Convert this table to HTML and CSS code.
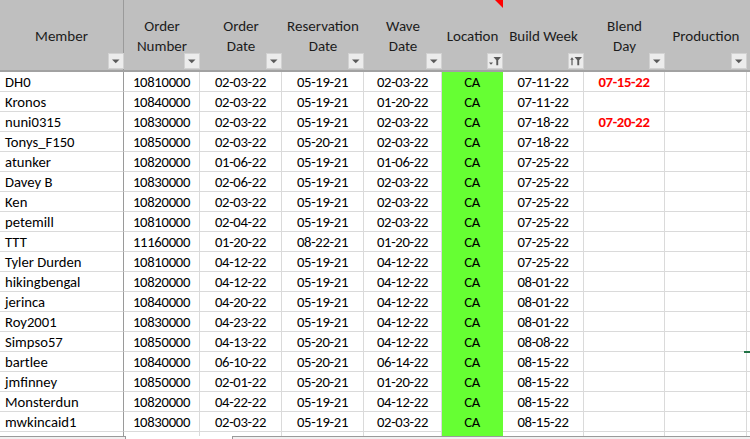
FILE: index.html
```html
<!DOCTYPE html>
<html>
<head>
<meta charset="utf-8">
<link rel="stylesheet" href="styles.css">
</head>
<body>
<div class="sheet">
  <div class="hdr">
    <div class="hc c1"><span>Member</span><i class="fbtn"><svg viewBox="0 0 14 14"><path d="M3 5.5H10.5L6.75 9.2Z"/></svg></i></div>
    <div class="hc"><span>Order<br>Number</span><i class="fbtn"><svg viewBox="0 0 14 14"><path d="M3 5.5H10.5L6.75 9.2Z"/></svg></i></div>
    <div class="hc"><span>Order<br>Date</span><i class="fbtn"><svg viewBox="0 0 14 14"><path d="M3 5.5H10.5L6.75 9.2Z"/></svg></i></div>
    <div class="hc"><span>Reservation<br>Date</span><i class="fbtn"><svg viewBox="0 0 14 14"><path d="M3 5.5H10.5L6.75 9.2Z"/></svg></i></div>
    <div class="hc"><span>Wave<br>Date</span><i class="fbtn"><svg viewBox="0 0 14 14"><path d="M3 5.5H10.5L6.75 9.2Z"/></svg></i></div>
    <div class="hc"><span>Location</span><i class="fbtn"><svg viewBox="0 0 14 14"><path d="M1 8.5H5L3 10.8Z"/><path d="M5.5 3H13L10.2 6.2V11.2H8.3V6.2Z"/></svg></i></div>
    <div class="hc"><span>Build Week</span><i class="fbtn"><svg viewBox="0 0 14 14"><path d="M3 3.2L4.8 5.8H3.6V11.2H2.4V5.8H1.2Z"/><path d="M5.5 3H13L10.2 6.2V11.2H8.3V6.2Z"/></svg></i></div>
    <div class="hc"><span>Blend<br>Day</span><i class="fbtn"><svg viewBox="0 0 14 14"><path d="M3 5.5H10.5L6.75 9.2Z"/></svg></i></div>
    <div class="hc"><span>Production</span><i class="fbtn"><svg viewBox="0 0 14 14"><path d="M3 5.5H10.5L6.75 9.2Z"/></svg></i></div>
    <div class="hc last"></div>
  </div>
  <div class="rows">
    <div class="row"><div class="c c1">DH0</div><div class="c">10810000</div><div class="c">02-03-22</div><div class="c">05-19-21</div><div class="c">02-03-22</div><div class="c loc">CA</div><div class="c">07-11-22</div><div class="c red">07-15-22</div><div class="c"></div><div class="c last"></div></div>
    <div class="row"><div class="c c1">Kronos</div><div class="c">10840000</div><div class="c">02-03-22</div><div class="c">05-19-21</div><div class="c">01-20-22</div><div class="c loc">CA</div><div class="c">07-11-22</div><div class="c"></div><div class="c"></div><div class="c last"></div></div>
    <div class="row"><div class="c c1">nuni0315</div><div class="c">10830000</div><div class="c">02-03-22</div><div class="c">05-19-21</div><div class="c">02-03-22</div><div class="c loc">CA</div><div class="c">07-18-22</div><div class="c red">07-20-22</div><div class="c"></div><div class="c last"></div></div>
    <div class="row"><div class="c c1">Tonys_F150</div><div class="c">10850000</div><div class="c">02-03-22</div><div class="c">05-20-21</div><div class="c">02-03-22</div><div class="c loc">CA</div><div class="c">07-18-22</div><div class="c"></div><div class="c"></div><div class="c last"></div></div>
    <div class="row"><div class="c c1">atunker</div><div class="c">10820000</div><div class="c">01-06-22</div><div class="c">05-19-21</div><div class="c">01-06-22</div><div class="c loc">CA</div><div class="c">07-25-22</div><div class="c"></div><div class="c"></div><div class="c last"></div></div>
    <div class="row"><div class="c c1">Davey B</div><div class="c">10830000</div><div class="c">02-06-22</div><div class="c">05-19-21</div><div class="c">02-03-22</div><div class="c loc">CA</div><div class="c">07-25-22</div><div class="c"></div><div class="c"></div><div class="c last"></div></div>
    <div class="row"><div class="c c1">Ken</div><div class="c">10820000</div><div class="c">02-03-22</div><div class="c">05-19-21</div><div class="c">02-03-22</div><div class="c loc">CA</div><div class="c">07-25-22</div><div class="c"></div><div class="c"></div><div class="c last"></div></div>
    <div class="row"><div class="c c1">petemill</div><div class="c">10810000</div><div class="c">02-04-22</div><div class="c">05-19-21</div><div class="c">02-03-22</div><div class="c loc">CA</div><div class="c">07-25-22</div><div class="c"></div><div class="c"></div><div class="c last"></div></div>
    <div class="row"><div class="c c1">TTT</div><div class="c">11160000</div><div class="c">01-20-22</div><div class="c">08-22-21</div><div class="c">01-20-22</div><div class="c loc">CA</div><div class="c">07-25-22</div><div class="c"></div><div class="c"></div><div class="c last"></div></div>
    <div class="row"><div class="c c1">Tyler Durden</div><div class="c">10810000</div><div class="c">04-12-22</div><div class="c">05-19-21</div><div class="c">04-12-22</div><div class="c loc">CA</div><div class="c">07-25-22</div><div class="c"></div><div class="c"></div><div class="c last"></div></div>
    <div class="row"><div class="c c1">hikingbengal</div><div class="c">10820000</div><div class="c">04-12-22</div><div class="c">05-19-21</div><div class="c">04-12-22</div><div class="c loc">CA</div><div class="c">08-01-22</div><div class="c"></div><div class="c"></div><div class="c last"></div></div>
    <div class="row"><div class="c c1">jerinca</div><div class="c">10840000</div><div class="c">04-20-22</div><div class="c">05-19-21</div><div class="c">04-12-22</div><div class="c loc">CA</div><div class="c">08-01-22</div><div class="c"></div><div class="c"></div><div class="c last"></div></div>
    <div class="row"><div class="c c1">Roy2001</div><div class="c">10830000</div><div class="c">04-23-22</div><div class="c">05-19-21</div><div class="c">04-12-22</div><div class="c loc">CA</div><div class="c">08-01-22</div><div class="c"></div><div class="c"></div><div class="c last"></div></div>
    <div class="row"><div class="c c1">Simpso57</div><div class="c">10850000</div><div class="c">04-13-22</div><div class="c">05-20-21</div><div class="c">04-12-22</div><div class="c loc">CA</div><div class="c">08-08-22</div><div class="c"></div><div class="c"></div><div class="c last"></div></div>
    <div class="row"><div class="c c1">bartlee</div><div class="c">10840000</div><div class="c">06-10-22</div><div class="c">05-20-21</div><div class="c">06-14-22</div><div class="c loc">CA</div><div class="c">08-15-22</div><div class="c"></div><div class="c"></div><div class="c last"></div></div>
    <div class="row"><div class="c c1">jmfinney</div><div class="c">10850000</div><div class="c">02-01-22</div><div class="c">05-20-21</div><div class="c">01-20-22</div><div class="c loc">CA</div><div class="c">08-15-22</div><div class="c"></div><div class="c"></div><div class="c last"></div></div>
    <div class="row"><div class="c c1">Monsterdun</div><div class="c">10820000</div><div class="c">04-22-22</div><div class="c">05-19-21</div><div class="c">04-12-22</div><div class="c loc">CA</div><div class="c">08-15-22</div><div class="c"></div><div class="c"></div><div class="c last"></div></div>
    <div class="row"><div class="c c1">mwkincaid1</div><div class="c">10830000</div><div class="c">02-03-22</div><div class="c">05-19-21</div><div class="c">02-03-22</div><div class="c loc">CA</div><div class="c">08-15-22</div><div class="c"></div><div class="c"></div><div class="c last"></div></div>
    <div class="row tail"><div class="c c1"></div><div class="c"></div><div class="c"></div><div class="c"></div><div class="c"></div><div class="c loc"></div><div class="c"></div><div class="c"></div><div class="c"></div><div class="c last"></div></div>
  </div>
  <div class="tabbar"><div class="tabgap"></div><div class="tab"></div><div class="tabrest"></div></div>
  <div class="comment"></div>
  <div class="selmark"></div>
</div>
</body>
</html>
```

FILE: styles.css
```css
html, body {
  margin: 0;
  padding: 0;
  background: #ffffff;
  overflow: hidden;
}
.sheet {
  position: relative;
  width: 750px;
  height: 439px;
  overflow: hidden;
  font-family: Carlito, Calibri, Lato, "Liberation Sans", sans-serif;
  font-size: 15px;
  color: #000;
}
.hdr, .row {
  display: grid;
  grid-template-columns: 124px 76px 82px 82px 78px 61px 81px 81px 82px 20px;
}
.hdr {
  height: 70px;
  background: #bfbfbf;
  border-bottom: 2px solid #a2a2a2;
}
.hc {
  position: relative;
  display: flex;
  align-items: center;
  justify-content: center;
  text-align: center;
  line-height: 20px;
  color: #1c1c1c;
  padding-top: 1px;
}
.hc.c1 {
  border-right: 1px solid #9a9a9a;
}
.fbtn {
  position: absolute;
  right: 0;
  bottom: 1px;
  width: 16px;
  height: 16px;
  box-sizing: border-box;
  border: 1px solid #d2d2d2;
  background: #ececec;
  display: block;
}
.hc.c1 .fbtn { right: -1px; }
.fbtn svg {
  display: block;
  width: 14px;
  height: 14px;
  fill: #5a5a5a;
}
.row {
  height: 20px;
}
.c {
  box-sizing: border-box;
  border-right: 1px solid #dadada;
  border-bottom: 1px solid #dadada;
  line-height: 19px;
  font-size: 14.67px;
  letter-spacing: -0.3px;
  text-align: center;
  white-space: nowrap;
  overflow: hidden;
  padding-top: 1px;
}
.c.c1 {
  text-align: left;
  padding-left: 5px;
  letter-spacing: 0;
  border-right-color: #9a9a9a;
}
.c.loc {
  background: #66ff33;
  border-right-color: #66ff33;
  border-bottom-color: #66ff33;
}
.c.red {
  color: #ff0000;
  font-weight: bold;
}
.c.last {
  border-right: none;
}
.row.tail .c {
  border-bottom: none;
}
.tabbar {
  position: absolute;
  left: 0;
  right: 0;
  top: 436px;
  height: 3px;
  display: flex;
}
.tabgap {
  width: 125px;
  border-top: 1px solid #9a9a9a;
  background: #f0f0f0;
}
.tab {
  width: 106px;
  background: #ffffff;
  border-left: 1px solid #9a9a9a;
  border-right: 1px solid #9a9a9a;
}
.tabrest {
  flex: 1;
  border-top: 1px solid #9a9a9a;
  background: #f0f0f0;
}
.comment {
  position: absolute;
  left: 495px;
  top: 0;
  width: 0;
  height: 0;
  border-top: 8px solid #ff0000;
  border-left: 8px solid transparent;
}
.selmark {
  position: absolute;
  left: 744px;
  top: 351px;
  width: 6px;
  height: 2px;
  background: #217346;
}
```
